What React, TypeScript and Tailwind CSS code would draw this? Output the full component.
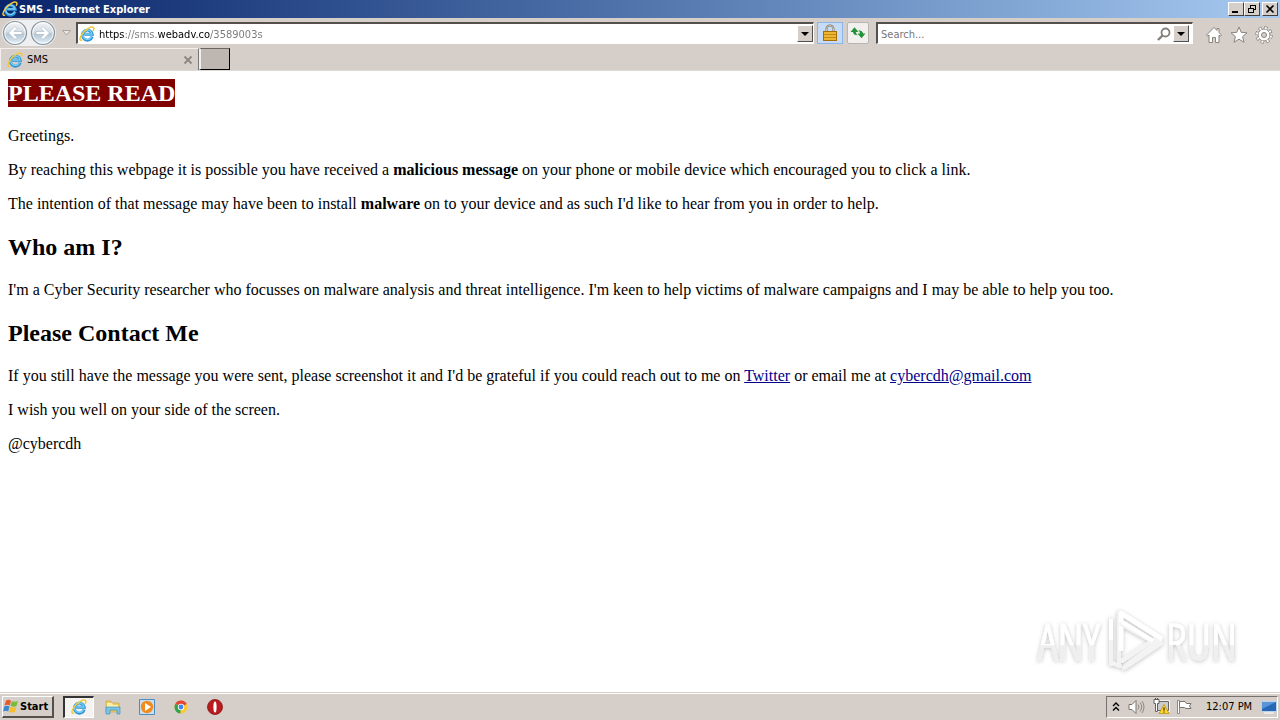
import type { ReactNode } from "react";

function IeIcon({ className = "size-4" }: { className?: string }) {
  return (
    <svg viewBox="0 0 16 16" className={className} aria-hidden="true">
      <path d="M13.200 10.500A5 5 0 1 1 13.300 8.200H5.200" fill="none" stroke="#2e93d6" strokeWidth="2.900" />
      <path d="M12.700 10.500A4.700 4.700 0 1 1 13 8H5.400" fill="none" stroke="#79d0f7" strokeWidth="1.300" />
      <path d="M2.600 14.200C.2 14.600.4 11.800 3.400 7.600 6.800 3.200 12.200.2 14.300 1.300c.9.600.7 1.800.1 3" fill="none" stroke="#f3c93c" strokeWidth="1.500" strokeLinecap="round" />
    </svg>
  );
}

function TitleButton({ label, children }: { label: string; children: ReactNode }) {
  return (
    <button aria-label={label} className="flex h-[14px] w-4 items-center justify-center border border-t-white border-l-white border-r-[#404040] border-b-[#404040] bg-[#d6cfc9]">
      <svg viewBox="0 0 12 10" className="h-[10px] w-3 shrink-0" fill="none" stroke="#000" shapeRendering="crispEdges">{children}</svg>
    </button>
  );
}

function DropButton({ label }: { label: string }) {
  return (
    <button aria-label={label} className="flex h-[17px] w-4 shrink-0 items-center justify-center border border-t-white border-l-white border-r-[#505050] border-b-[#505050] bg-[#d6cfc9]">
      <svg viewBox="0 0 8 4" className="h-1 w-2"><path d="M0 0h8L4 4z" /></svg>
    </button>
  );
}

function RoundButton({ label, flip = false }: { label: string; flip?: boolean }) {
  return (
    <button aria-label={label} className="size-[26px]">
      <svg viewBox="0 0 26 26" className="size-[26px]">
        <defs>
          <linearGradient id={flip ? "glassF" : "glassB"} x1="0" y1="0" x2="0" y2="1">
            <stop offset="0" stopColor="#f4f6f8" /><stop offset=".45" stopColor="#d5dde4" /><stop offset=".55" stopColor="#b4c6d4" /><stop offset="1" stopColor="#e3f3fb" />
          </linearGradient>
        </defs>
        <circle cx="13" cy="13" r="11.500" fill={flip ? "url(#glassF)" : "url(#glassB)"} stroke="#8a949d" strokeWidth="1.200" />
        <circle cx="13" cy="13" r="10.200" fill="none" stroke="#fff" strokeOpacity=".8" />
        <path d={flip ? "M6 11.500h8L11 8.500l2-2 6.500 6.500-6.500 6.500-2-2 3-3H6z" : "M20 11.500h-8l3-3-2-2L6.500 13l6.500 6.500 2-2-3-3h8z"} fill="#fff" stroke="#a7b4bf" strokeWidth=".6" />
      </svg>
    </button>
  );
}

function TitleBar() {
  return (
    <header className="flex h-[18px] shrink-0 items-center justify-between bg-linear-to-r from-[#0a246a] to-[#a6caf0] pr-[2px] pl-[2px]">
      <div className="flex items-center gap-px">
        <IeIcon />
        <h1 className="pt-px text-[11px] leading-4 font-bold text-white">SMS - Internet Explorer</h1>
      </div>
      <div className="flex">
        <TitleButton label="Minimize"><path d="M2 8h6" strokeWidth="2" /></TitleButton>
        <TitleButton label="Restore"><path d="M4 1.500h6M4.500 1v3M9.500 1v5M7 5.500h3M2 4.500h6M2.500 4v5M7.500 4v5M2 8.500h6" /></TitleButton>
        <div className="w-[2px]" />
        <TitleButton label="Close"><path d="M2.500 1.500l7 7M9.500 1.500l-7 7" strokeWidth="1.600" shapeRendering="auto" /></TitleButton>
      </div>
    </header>
  );
}

function NavBar() {
  return (
    <div className="flex h-[30px] shrink-0 items-center pr-[7px] pl-[2px]">
      <div className="flex h-[26px] items-center gap-[2px] rounded-full bg-[#eeeff0]">
        <RoundButton label="Back" />
        <RoundButton label="Forward" flip />
      </div>
      <button aria-label="Recent pages" className="flex w-5 justify-center">
        <svg viewBox="0 0 9 6" className="h-[6px] w-[9px]"><path d="M.5.5h8l-4 4.500z" fill="#e8e4e0" stroke="#aaa5a0" /></svg>
      </button>
      <div className="flex h-[22px] flex-1 items-center border-t-2 border-l-2 border-r border-b border-t-[#55504c] border-l-[#55504c] border-r-white border-b-white bg-white pl-px">
        <IeIcon />
        <input
          aria-label="Address"
          defaultValue="https://sms.webadv.co/3589003s"
          className="ml-1 h-[18px] min-w-0 flex-1 bg-[linear-gradient(to_right,#000_25px,#777_25px,#777_59px,#000_59px,#000_111px,#777_111px)] bg-clip-text pt-[2px] text-[11px] text-transparent caret-black outline-none"
        />
        <DropButton label="Show address list" />
      </div>
      <button aria-label="Security report" className="ml-[3px] flex h-[22px] w-[26px] items-center justify-center border border-[#8bb4e8] bg-[#c6dcf6]">
        <svg viewBox="0 0 16 18" className="h-[18px] w-4">
          <path d="M4.500 8V5a3.500 3.500 0 0 1 7 0v3" fill="none" stroke="#77705c" strokeWidth="2" />
          <path d="M4.500 8V5a3.500 3.500 0 0 1 7 0v3" fill="none" stroke="#e4dcc0" strokeWidth=".8" />
          <rect x="1.500" y="7.500" width="13" height="9" fill="#edb82f" stroke="#a66c0a" />
          <path d="M2 10.500h12M2 13.500h12" stroke="#c68719" />
        </svg>
      </button>
      <button aria-label="Refresh" className="ml-1 flex size-[22px] items-center justify-center rounded-[2px] border border-[#b9b4b0] bg-[#f1f0ef]">
        <svg viewBox="0 0 16 16" className="size-4" fill="#249338">
          <path d="M.5 7 4.500 2.200 8.500 7H6c0 1.600.8 2.600 2 3.300C4.800 10.300 3 9 3 7z" />
          <path d="M15.500 8.500 11.500 13.300 7.500 8.500H10c0-1.600-.8-2.600-2-3.300 3.200 0 5 1.300 5 3.300z" />
        </svg>
      </button>
      <div className="ml-[7px] flex h-[22px] w-[317px] items-center border-t-2 border-l-2 border-r border-b border-t-[#55504c] border-l-[#55504c] border-r-white border-b-white bg-white pr-[3px]">
        <input aria-label="Search the web" placeholder="Search..." className="h-[18px] min-w-0 flex-1 pt-[2px] pl-[3px] text-[11px] outline-none placeholder:text-[#777]" />
        <button aria-label="Search" className="mr-[2px]">
          <svg viewBox="0 0 14 14" className="size-[14px]" fill="none" stroke="#85807c"><circle cx="8.500" cy="5.500" r="4" strokeWidth="1.800" /><path d="M5.500 8.500 1 13" strokeWidth="2.400" /></svg>
        </button>
        <DropButton label="Search options" />
      </div>
      <div className="ml-3 flex items-center gap-[7px] pt-1">
        <button aria-label="Home"><svg viewBox="0 0 18 18" className="size-[18px]" fill="#fff" stroke="#88837f"><path d="M9 1.500 1.500 9l1 1.200L4 9v7.500h3.500v-5h3v5H14V9l1.500 1.200 1-1.200L14 6.500v-4h-2v2z" /></svg></button>
        <button aria-label="Favorites"><svg viewBox="0 0 18 18" className="size-[18px]" fill="#fff" stroke="#88837f"><path d="m9 1 2.200 5.300 5.800.5-4.400 3.800 1.400 5.700-5-3.100-5 3.100 1.400-5.700L1 6.800l5.800-.5z" /></svg></button>
        <button aria-label="Tools">
          <svg viewBox="0 0 18 18" className="size-[18px]">
            <circle cx="9" cy="9" r="7.200" fill="none" stroke="#88837f" strokeWidth="3" strokeDasharray="3.200 2.455" />
            <circle cx="9" cy="9" r="6" fill="#fff" stroke="#88837f" />
            <circle cx="9" cy="9" r="7" fill="none" stroke="#fff" strokeWidth="2" strokeDasharray="2 3.498" strokeDashoffset="-.6" />
            <circle cx="9" cy="9" r="2.500" fill="#d6cfc9" stroke="#88837f" />
          </svg>
        </button>
      </div>
    </div>
  );
}

function TabBar() {
  return (
    <div className="flex h-[23px] shrink-0 border-b border-[#dedad6]">
      <div className="flex w-[199px] items-center border-t border-r border-l border-t-[#f2efed] border-r-[#777] border-l-[#f2efed] pr-[5px] pl-[6px]">
        <IeIcon />
        <a href="#page" className="ml-1 flex-1 pt-px text-[11px] leading-4 text-black">SMS</a>
        <button aria-label="Close tab"><svg viewBox="0 0 10 10" className="size-[10px]"><path d="M1.500 1.500l7 7m0-7-7 7" stroke="#8b8682" strokeWidth="1.800" /></svg></button>
      </div>
      <button aria-label="New tab" className="h-[22px] w-[31px] border-t border-r border-b border-l-2 border-t-[#6b6663] border-r-black border-b-black border-l-[#f2efed] bg-[#bdb6b1]" />
    </div>
  );
}

function Watermark() {
  return (
    <svg viewBox="0 0 210 70" className="absolute right-10 bottom-4 h-[70px] w-[210px]" role="img" aria-label="ANY RUN">
      <defs>
        <filter id="soft" x="-10%" y="-10%" width="120%" height="120%"><feDropShadow dx="0" dy="1" stdDeviation="2" floodColor="#000" floodOpacity=".26" /></filter>
        <linearGradient id="fade" x1="0" y1="0" x2="0" y2="1"><stop offset=".56" stopColor="#fff" /><stop offset=".57" stopColor="#efefef" /></linearGradient>
      </defs>
      <g filter="url(#soft)" fontFamily="'Open Sans Condensed Light','Noto Sans ExtraCondensed Light','Liberation Sans Narrow','Roboto Condensed',sans-serif" fontSize="49" fontWeight="300">
        <text x="8" y="54" fill="url(#fade)" stroke="url(#fade)" strokeWidth="1.200">ANY</text>
        <text x="136" y="54" fill="url(#fade)" stroke="url(#fade)" strokeWidth="1.200">RUN</text>
        <path d="M89 60V6l42 27L95 60" fill="none" stroke="#f3f3f3" strokeWidth="4" strokeLinejoin="round" />
        <path d="M91 45V7l41 26" fill="none" stroke="#fff" strokeWidth="4.500" strokeLinejoin="round" />
        <path d="M81 13v45M91 18l33 18M90 60l-8-3M92 55l33-22M94 62l37-25" fill="none" stroke="#f3f3f3" strokeWidth="4" strokeLinecap="round" />
        <path d="M81 13v21M92 16l31 19" stroke="#fff" strokeWidth="4" />
      </g>
    </svg>
  );
}

function Page() {
  return (
    <main id="page" className="relative flex-1 overflow-auto bg-white px-2 pt-2 font-['Liberation_Serif',serif] text-[16px] leading-[18px] text-black">
      <h2 className="text-2xl leading-7 font-bold text-white"><span className="inline-block bg-[#800000]">PLEASE READ</span></h2>
      <p className="mt-5">Greetings.</p>
      <p className="mt-4">By reaching this webpage it is possible you have received a <b>malicious message</b> on your phone or mobile device which encouraged you to click a link.</p>
      <p className="mt-4">The intention of that message may have been to install <b>malware</b> on to your device and as such I'd like to hear from you in order to help.</p>
      <h2 className="mt-5 text-2xl leading-7 font-bold">Who am I?</h2>
      <p className="mt-5">I'm a Cyber Security researcher who focusses on malware analysis and threat intelligence. I'm keen to help victims of malware campaigns and I may be able to help you too.</p>
      <h2 className="mt-5 text-2xl leading-7 font-bold">Please Contact Me</h2>
      <p className="mt-5">If you still have the message you were sent, please screenshot it and I'd be grateful if you could reach out to me on <a href="#twitter" className="text-[#00008b] underline">Twitter</a> or email me at <a href="mailto:cybercdh@gmail.com" className="text-[#00008b] underline">cybercdh@gmail.com</a></p>
      <p className="mt-4">I wish you well on your side of the screen.</p>
      <p className="mt-4">@cybercdh</p>
      <Watermark />
    </main>
  );
}

function Taskbar() {
  return (
    <footer className="flex h-7 shrink-0 items-center border-t border-[#d6cfc9] pr-[2px] pl-[2px] shadow-[inset_0_1px_0_#fff]">
      <button className="flex h-[22px] w-[52px] items-center gap-px border-t border-r-2 border-b-2 border-l border-t-white border-r-[#55504c] border-b-[#55504c] border-l-white text-[11px] font-bold">
        <svg viewBox="0 0 16 16" className="size-4 shrink-0">
          <path d="M3 2.500c2-1 3.500-.8 5 .3L6.800 7.600C5.300 6.600 3.800 6.600 1.500 7.400z" fill="#e65b2b" />
          <path d="M8.800 3c1.600 1 3.400 1 6 0L13.500 8c-2 1-4.100.9-5.900-.1z" fill="#7dba3c" />
          <path d="M1.300 8.400c2-.9 3.700-.8 5.200.1l-1.300 4.900c-1.500-1-3-1-5.100 0z" fill="#3b86d0" />
          <path d="M7.300 8.800c1.700 1 3.700 1 5.900.1L12 13.900c-2 1-4.200.9-6-.1z" fill="#f4bf2a" />
        </svg>
        <span className="pt-[2px]">Start</span>
      </button>
      <nav aria-label="Running programs" className="ml-[9px] flex flex-1 items-center">
        <button aria-label="Internet Explorer" className="flex h-[22px] w-[31px] items-center justify-center border-t-2 border-r border-b border-l-2 border-t-[#333] border-r-white border-b-white border-l-[#333] bg-[#f4f3f1]"><IeIcon className="size-4" /></button>
        <button aria-label="File Explorer" className="ml-[10px]">
          <svg viewBox="0 0 18 18" className="size-[18px]"><path d="M2 3h5l1 2h7v9H2z" fill="#edcd69" stroke="#c9a545" strokeWidth=".7" /><path d="M3 5h5l1 2h5v5H3z" fill="#fff0a8" /><path d="M2 9h14v7h-3v-4H6v4H2z" fill="#7cc4e5" stroke="#3f92bc" strokeWidth=".7" /></svg>
        </button>
        <button aria-label="Media Player" className="ml-4">
          <svg viewBox="0 0 18 18" className="size-[18px]"><path d="M1.500 1.500h15v15h-15z" fill="#c9e0f1" stroke="#4d8cc0" /><circle cx="9" cy="9" r="6.200" fill="#f28b1d" /><path d="M7 5v8l6-4z" fill="#fff" /></svg>
        </button>
        <button aria-label="Chrome" className="ml-4">
          <svg viewBox="0 0 18 18" className="size-[18px]"><circle cx="9" cy="9" r="6.500" fill="#fbcb2d" /><path d="M9 9 3.400 5.700A6.500 6.500 0 0 1 14.700 6z" fill="#e34436" /><path d="M9 9 3.400 5.700A6.500 6.500 0 0 0 8.300 15.500z" fill="#31a250" /><circle cx="9" cy="9" r="3.200" fill="#fff" /><circle cx="9" cy="9" r="2.400" fill="#4385ee" /></svg>
        </button>
        <button aria-label="Opera" className="ml-4">
          <svg viewBox="0 0 18 18" className="size-[18px]"><circle cx="9" cy="9" r="7.500" fill="#ba1b1d" stroke="#861113" strokeWidth=".8" /><ellipse cx="9" cy="9" rx="1.600" ry="5.500" fill="#fff" /></svg>
        </button>
      </nav>
      <div className="flex h-[22px] w-[172px] items-center border border-t-[#77726e] border-l-[#77726e] border-r-white border-b-white">
        <button aria-label="Show hidden icons" className="ml-[5px]"><svg viewBox="0 0 8 10" className="h-[10px] w-2" fill="none" stroke="#000" strokeWidth="1.400"><path d="m1 4 3-3 3 3M1 8.500l3-3 3 3" /></svg></button>
        <button aria-label="Volume" className="ml-2"><svg viewBox="0 0 17 16" className="h-4 w-[17px]"><path d="M1 5.500h3l4-4v13l-4-4H1z" fill="#fff" stroke="#78736f" /><path d="M10 5.500q2 2.500 0 5M12 3.500q3.500 4.500 0 9M14 2q4 6 0 12" fill="none" stroke="#8d8884" /></svg></button>
        <button aria-label="Network" className="ml-2">
          <svg viewBox="0 0 17 17" className="size-[17px]"><path d="M4.500 3.500h11v9h-11z" fill="#d9dadb" stroke="#fff" strokeWidth="2.500" /><path d="M4.500 3.500h11v9h-11z" fill="#c9cbcd" stroke="#666" /><path d="M1 1.500h5v4H4.500v8H2.500v-8H1z" fill="#fff" stroke="#555" strokeWidth=".9" /><path d="M2.500 0v2M4.500 0v2" stroke="#555" /><path d="m11 6.500 5 9H6z" fill="#ffd52e" stroke="#b78c00" strokeWidth=".7" /><path d="M11 9.500v3m0 1v1" stroke="#000" /></svg>
        </button>
        <button aria-label="Action Center" className="ml-[6px]"><svg viewBox="0 0 17 16" className="h-4 w-[17px]"><path d="M1.500 1.500h2v13h-2z" fill="#fff" stroke="#77726e" strokeWidth=".8" /><path d="M3.500 2.500H9l1.500 2H15l-1.500 2.500 1.500 2.500h-5L8.500 8.500h-5z" fill="#fff" stroke="#77726e" /></svg></button>
        <time className="ml-[13px] flex-1 pt-[2px] text-[11px] whitespace-nowrap">12:07 PM</time>
        <button aria-label="Show desktop"><svg viewBox="0 0 16 14" className="h-[14px] w-4"><path d="M.5 1.500h15v10H.5z" fill="#2767b5" stroke="#b9d3ef" /><path d="M1 2h14L1 9z" fill="#5795d8" /><path d="M3 13h10" stroke="#fff" /></svg></button>
      </div>
    </footer>
  );
}

export default function App() {
  return (
    <div className="flex h-screen min-w-0 flex-col bg-[#d6cfc9] font-['DejaVu_Sans_Condensed','DejaVu_Sans',sans-serif] text-black">
      <TitleBar />
      <NavBar />
      <TabBar />
      <Page />
      <Taskbar />
    </div>
  );
}
